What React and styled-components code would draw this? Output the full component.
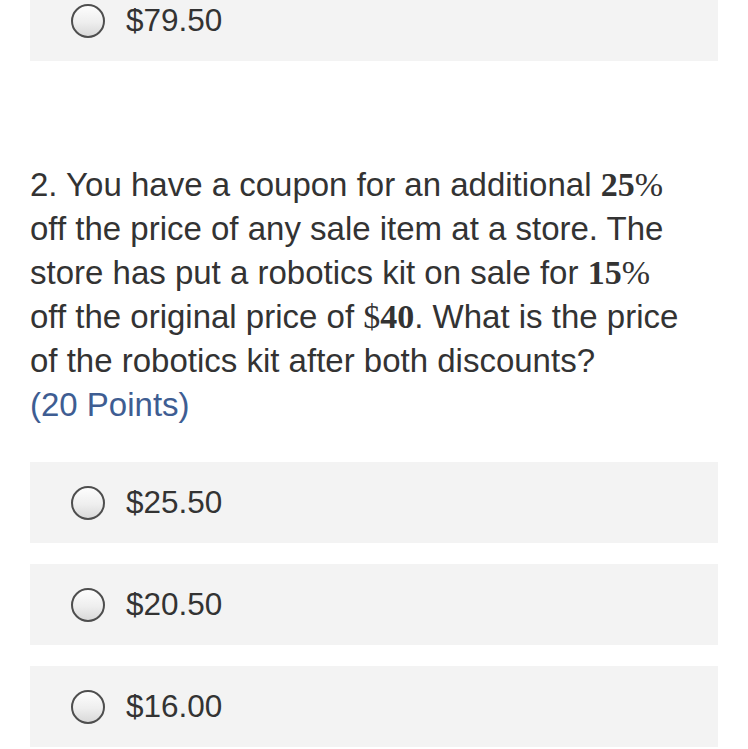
import React from "react";
import styled, { createGlobalStyle } from "styled-components";

const GlobalStyle = createGlobalStyle`
  html, body {
    margin: 0;
    padding: 0;
    background: #ffffff;
    overflow: hidden;
  }
  body {
    font-family: "Liberation Sans", Arial, Helvetica, sans-serif;
    color: #333333;
  }
`;

const Page = styled.div`
  width: 748px;
  height: 749px;
  overflow: hidden;
  padding: 0 30px;
  box-sizing: border-box;
`;

const Choices = styled.div`
  display: flex;
  flex-direction: column;
  gap: 21px;
  margin-top: ${(p) => p.$top || 0}px;
`;

const Choice = styled.label`
  display: flex;
  align-items: center;
  height: 81px;
  background: #f3f3f3;
  padding-left: 41px;
  gap: 21px;
  font-size: 31.5px;
  color: #333333;
`;

const Radio = styled.span`
  width: 30px;
  height: 30px;
  border-radius: 50%;
  border: 2px solid #4e4e4e;
  background: linear-gradient(180deg, #fdfdfd 0%, #eeeeee 55%, #d9d9d9 100%);
  flex-shrink: 0;
`;

const Question = styled.div`
  margin-top: 102px;
  margin-bottom: 35px;
  font-size: 33px;
  line-height: 44px;
  color: #333333;
  white-space: nowrap;
`;

const Math = styled.span`
  font-family: "Liberation Serif", "Times New Roman", serif;
  font-size: 34px;
  font-weight: ${(p) => (p.$bold ? 700 : 400)};
`;

const Points = styled.div`
  color: #3e5d92;
`;

const Option = ({ children }) => (
  <Choice>
    <Radio />
    <span>{children}</span>
  </Choice>
);

export default function App() {
  return (
    <Page>
      <GlobalStyle />
      <Choices $top={-20}>
        <Option>$79.50</Option>
      </Choices>
      <Question>
        2. You have a coupon for an additional <Math $bold>25</Math>
        <Math>%</Math>
        <br />
        off the price of any sale item at a store. The
        <br />
        store has put a robotics kit on sale for <Math $bold>15</Math>
        <Math>%</Math>
        <br />
        off the original price of <Math>$</Math>
        <Math $bold>40</Math>. What is the price
        <br />
        of the robotics kit after both discounts?
        <Points>(20 Points)</Points>
      </Question>
      <Choices>
        <Option>$25.50</Option>
        <Option>$20.50</Option>
        <Option>$16.00</Option>
      </Choices>
    </Page>
  );
}
